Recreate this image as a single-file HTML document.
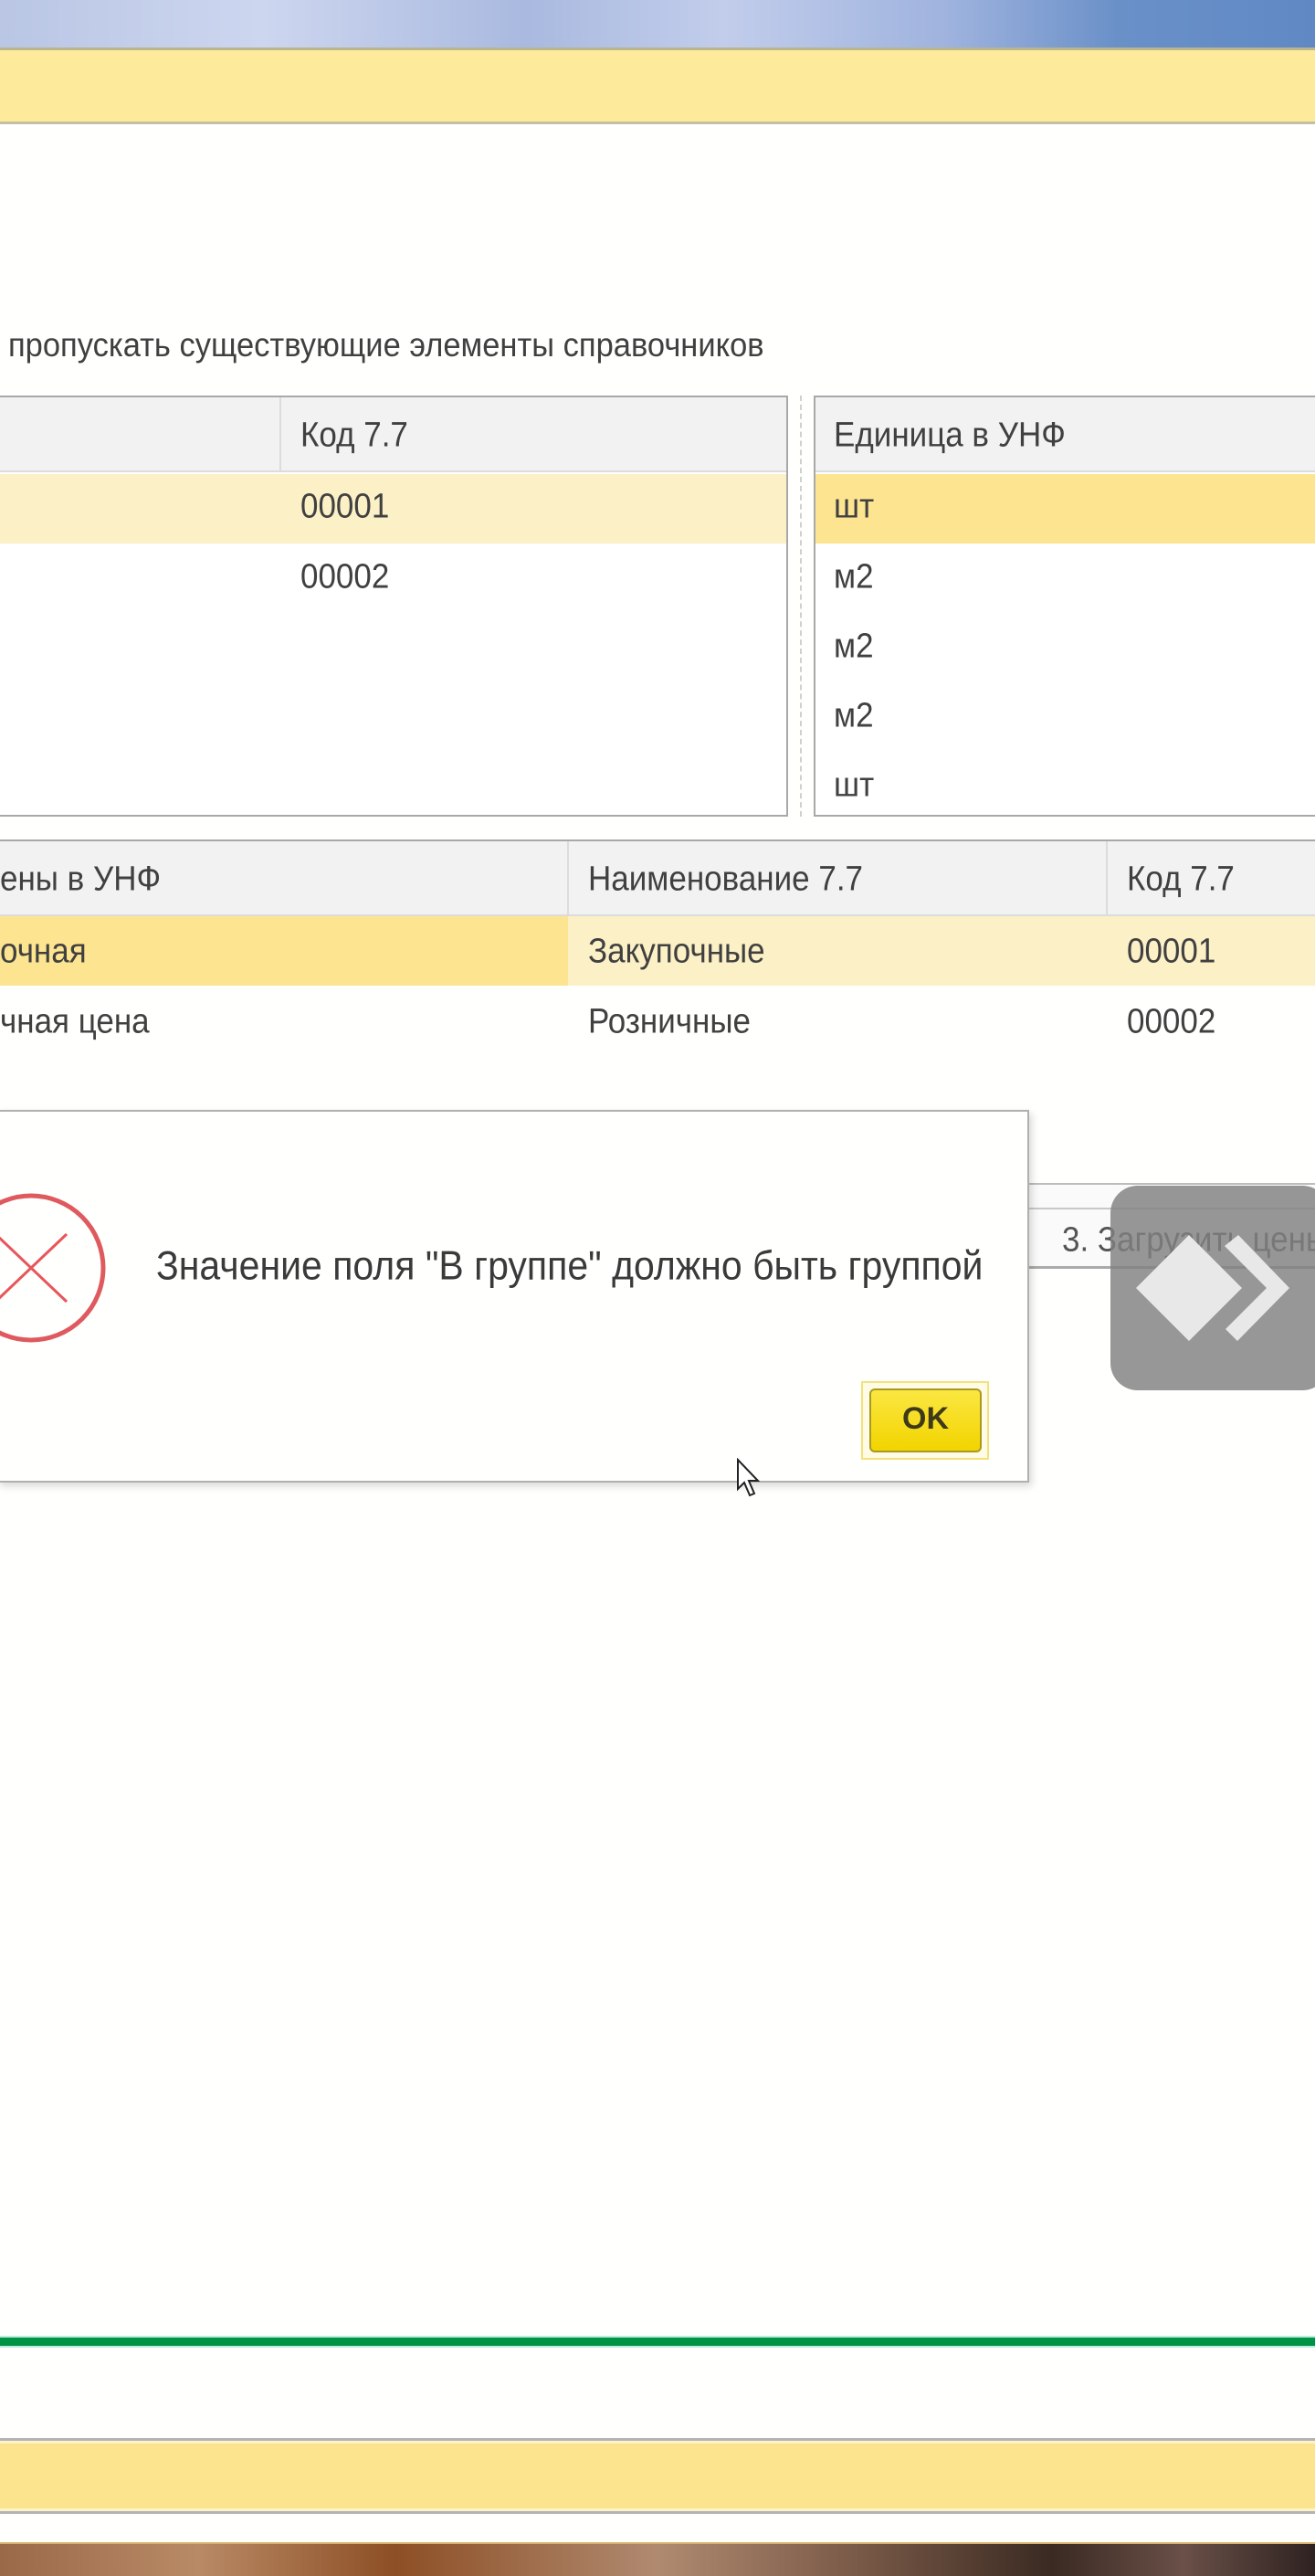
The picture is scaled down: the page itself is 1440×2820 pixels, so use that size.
<!DOCTYPE html>
<html><head><meta charset="utf-8"><style>
*{margin:0;padding:0;box-sizing:border-box}
body{width:1440px;height:2820px;position:relative;overflow:hidden;background:#fffffd;font-family:"Liberation Sans","DejaVu Sans",sans-serif;color:#404040}
.a{position:absolute}
.t{position:absolute;font-size:35px;white-space:nowrap;line-height:1;transform:scaleY(1.08);transform-origin:left top}
</style></head><body>
<div class="a" style="left:0;top:0;width:1440px;height:53px;background:linear-gradient(90deg,#b9c6e4 0%,#cdd6ef 20%,#a9b9df 40%,#c2cdeb 55%,#9fb3de 72%,#6a90c8 85%,#6089c4 100%)"></div>
<div class="a" style="left:0;top:52px;width:1440px;height:84px;background:#fdeb9b;border-top:3px solid #b9b58c;border-bottom:3px solid #c4c0a0"></div>

<div class="t" style="left:9px;top:360px;font-size:34.5px">пропускать существующие элементы справочников</div>

<div class="a" style="left:-2px;top:433px;width:865px;height:461px;border:2px solid #a8a8a8;background:#fff">
  <div class="a" style="left:0;top:0;width:861px;height:82px;background:#f2f2f2;border-bottom:2px solid #dcdcdc"></div>
  <div class="a" style="left:306px;top:0;width:2px;height:82px;background:#dcdcdc"></div>
  <div class="a" style="left:0;top:84px;width:861px;height:76px;background:#fcf0c6"></div>
</div>
<div class="t" style="left:329px;top:457px">Код 7.7</div>
<div class="t" style="left:329px;top:535px">00001</div>
<div class="t" style="left:329px;top:612px">00002</div>
<div class="a" style="left:876px;top:433px;width:0;height:461px;border-left:2px dashed #d0d0d0"></div>
<div class="a" style="left:891px;top:433px;width:560px;height:461px;border:2px solid #a8a8a8;background:#fff">
  <div class="a" style="left:0;top:0;width:560px;height:82px;background:#f2f2f2;border-bottom:2px solid #dcdcdc"></div>
  <div class="a" style="left:0;top:84px;width:560px;height:76px;background:#fde490"></div>
</div>
<div class="t" style="left:913px;top:457px">Единица в УНФ</div>
<div class="t" style="left:913px;top:535px">шт</div>
<div class="t" style="left:913px;top:612px">м2</div>
<div class="t" style="left:913px;top:688px">м2</div>
<div class="t" style="left:913px;top:764px">м2</div>
<div class="t" style="left:913px;top:840px">шт</div>

<div class="a" style="left:0;top:919px;width:1440px;height:84px;background:#f2f2f2;border-top:2px solid #a8a8a8;border-bottom:2px solid #dcdcdc"></div>
<div class="a" style="left:621px;top:921px;width:2px;height:80px;background:#dcdcdc"></div>
<div class="a" style="left:1211px;top:921px;width:2px;height:80px;background:#dcdcdc"></div>
<div class="a" style="left:0;top:1003px;width:622px;height:76px;background:#fde490"></div>
<div class="a" style="left:622px;top:1003px;width:818px;height:76px;background:#fcf0c6"></div>
<div class="t" style="left:0;top:943px">ены в УНФ</div>
<div class="t" style="left:644px;top:943px">Наименование 7.7</div>
<div class="t" style="left:1234px;top:943px">Код 7.7</div>
<div class="t" style="left:0;top:1022px">очная</div>
<div class="t" style="left:644px;top:1022px">Закупочные</div>
<div class="t" style="left:1234px;top:1022px">00001</div>
<div class="t" style="left:0;top:1099px">чная цена</div>
<div class="t" style="left:644px;top:1099px">Розничные</div>
<div class="t" style="left:1234px;top:1099px">00002</div>

<div class="a" style="left:1127px;top:1295px;width:313px;height:94px;background:#fafafa;border-top:2px solid #bcbcbc;border-bottom:3px solid #aaa"></div>
<div class="a" style="left:1127px;top:1322px;width:313px;height:2px;background:#c8c8c8"></div>
<div class="t" style="left:1163px;top:1338px;font-size:35px;color:#555">3. Загрузить цены</div>

<div class="a" style="left:-3px;top:1215px;width:1130px;height:408px;background:#fffffd;border:2px solid #b0b0b0;box-shadow:3px 4px 8px rgba(0,0,0,.15)"></div>
<svg class="a" style="left:-60px;top:1295px" width="190" height="190" viewBox="0 0 190 190">
  <circle cx="94" cy="93" r="79" fill="none" stroke="#df5a5f" stroke-width="5"/>
  <path d="M55 56 L133 130 M133 56 L55 130" stroke="#e8555a" stroke-width="3"/>
</svg>
<div class="t" style="left:171px;top:1364px;font-size:41px;color:#3a3a3a">Значение поля "В группе" должно быть группой</div>
<div class="a" style="left:943px;top:1512px;width:140px;height:86px;border:2px solid #f3e27a;background:#fffbe6"></div>
<div class="a" style="left:952px;top:1520px;width:123px;height:70px;border:2px solid #a89a20;border-radius:6px;background:linear-gradient(#fbe742,#f2d400)"></div>
<div class="t" style="left:952px;top:1536px;width:123px;text-align:center;font-size:34px;color:#3d3a1a;font-weight:bold;transform:none">OK</div>
<svg class="a" style="left:806px;top:1596px" width="30" height="46" viewBox="0 0 30 46"><path d="M2 2 L2 34 L9 27 L15 41 L20 39 L14 25 L24 25 Z" fill="#fff" stroke="#222" stroke-width="2"/></svg>

<div class="a" style="left:1216px;top:1298px;width:240px;height:224px;border-radius:30px;background:rgba(128,128,128,.82)"></div>
<svg class="a" style="left:0;top:0" width="1440" height="2820"><path d="M1302 1352 L1360 1410 L1302 1468 L1244 1410 Z" fill="#e8e8e8"/><path d="M1341 1364 L1356 1352 L1412 1410 L1355 1468 L1342 1455 L1387 1410 Z" fill="#e8e8e8"/></svg>

<div class="a" style="left:0;top:2557px;width:1440px;height:13px;background:#009245;border-top:2px solid #b8eddc;border-bottom:2px solid #b8eddc"></div>
<div class="a" style="left:0;top:2669px;width:1440px;height:83px;background:#fce38d;border-top:3px solid #b4b4b4;border-bottom:3px solid #b4b4b4;box-shadow:inset 0 3px 0 #fdf3c8,inset 0 -3px 0 #fdf3c8"></div>
<div class="a" style="left:0;top:2783px;width:1440px;height:37px;background:linear-gradient(90deg,#9a6a48 0%,#b98a66 15%,#8d4f25 30%,#b08a70 50%,#7a5a48 65%,#3a2a22 80%,#6a5048 90%,#2e2220 100%);border-top:2px solid #d8b070"></div>
</body></html>
